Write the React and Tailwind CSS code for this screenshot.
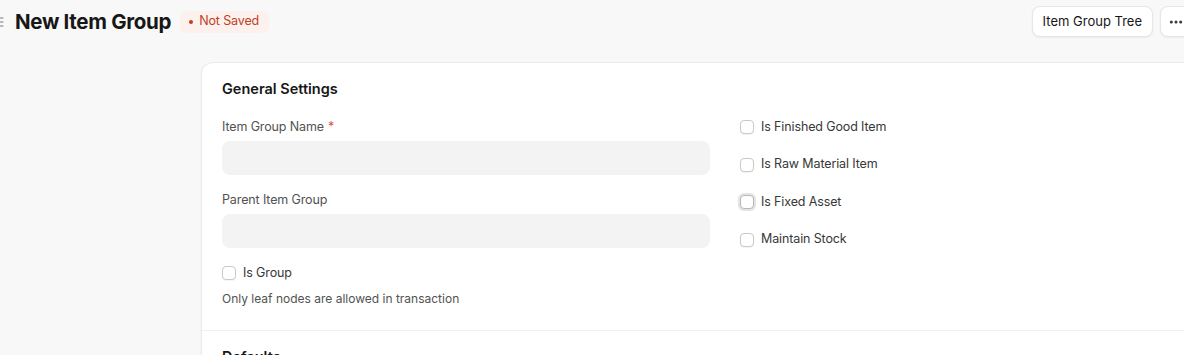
import { MoreHorizontal } from 'lucide-react';

const Checkbox = ({ label, focused }) => (
  <label className="flex items-center gap-[7px] h-[20px] text-[12.5px] tracking-[-0.01em] text-[#383838]">
    <span
      className={`w-[14px] h-[14px] rounded-[4px] bg-white border ${
        focused ? 'border-[#b8b8b8] ring-2 ring-[#e4e4e4]' : 'border-[#c9c9c9]'
      } shadow-[0_1px_1px_rgba(0,0,0,0.05)]`}
    ></span>
    {label}
  </label>
);

const Field = ({ label, required }) => (
  <div className="flex flex-col">
    <div className="h-[20px] leading-[20px] text-[12.5px] tracking-[-0.01em] text-[#525252] mb-[4px]">
      {label}
      {required && <span className="text-[#e24c4c] ml-[4px]">*</span>}
    </div>
    <div className="h-[34px] rounded-lg bg-[#f3f3f3]"></div>
  </div>
);

export default function App() {
  return (
    <div className="w-full h-[355px] overflow-hidden bg-[#f8f8f8]" style={{ fontFamily: 'Inter, "Noto Sans", sans-serif' }}>
      <div className="w-[1210px] -ml-[11px]">
        {/* Header */}
        <div className="h-[43px] flex items-center pr-[7px]">
          <div className="flex items-center gap-[9px]">
            <svg width="16" height="16" viewBox="0 0 16 16" fill="none" stroke="#7c7c7c" strokeWidth="1.2" strokeLinecap="round">
              <path d="M2 4h12M2 8h12M2 12h12" />
            </svg>
            <h1 className="ml-[1px] text-[20.5px] leading-[28px] font-bold text-[#171717] tracking-[-0.015em]">New Item Group</h1>
            <span className="flex items-center gap-[6px] h-[22px] pl-[9px] pr-[10px] rounded-md bg-[#fdf1ee] text-[12.5px] tracking-[-0.01em] text-[#c0401f]">
              <span className="w-[4px] h-[4px] rounded-full bg-[#c0401f]"></span>
              Not Saved
            </span>
          </div>
          <div className="ml-auto flex items-center gap-[7px]">
            <button className="h-[31px] px-[10px] rounded-lg bg-white border border-[#e6e6e6] shadow-[0_1px_2px_rgba(0,0,0,0.06)] text-[13px] text-[#171717]">
              Item Group Tree
            </button>
            <button className="h-[31px] w-[32px] flex items-center justify-center rounded-lg bg-white border border-[#e6e6e6] shadow-[0_1px_2px_rgba(0,0,0,0.06)] text-[#383838]">
              <MoreHorizontal size={16} strokeWidth={2.5} />
            </button>
          </div>
        </div>

        {/* Body */}
        <div className="flex mt-[19px]">
          <div className="w-[212px] flex-none"></div>
          <div className="w-[1000px] flex-none bg-white rounded-tl-xl border border-[#ebebeb] shadow-[0_1px_3px_rgba(0,0,0,0.05)]">
            <div className="px-[20px] pt-[15px] pb-[22px] border-b border-[#f0f0f0]">
              <h2 className="text-[14.5px] leading-[22px] font-semibold text-[#171717]">General Settings</h2>
              <div className="grid grid-cols-[488px_488px] gap-x-[30px] mt-[17px]">
                <div className="flex flex-col">
                  <Field label="Item Group Name" required />
                  <div className="mt-[15px]">
                    <Field label="Parent Item Group" />
                  </div>
                  <div className="mt-[15px]">
                    <Checkbox label="Is Group" />
                  </div>
                  <p className="mt-[7px] text-[12px] leading-[18px] text-[#525252]">Only leaf nodes are allowed in transaction</p>
                </div>
                <div className="flex flex-col gap-[17.5px]">
                  <Checkbox label="Is Finished Good Item" />
                  <Checkbox label="Is Raw Material Item" />
                  <Checkbox label="Is Fixed Asset" focused />
                  <Checkbox label="Maintain Stock" />
                </div>
              </div>
            </div>
            <div className="px-[20px] pt-[15px] pb-[22px]">
              <h2 className="text-[14.5px] leading-[22px] font-semibold text-[#171717]">Defaults</h2>
            </div>
          </div>
        </div>
      </div>
    </div>
  );
}
